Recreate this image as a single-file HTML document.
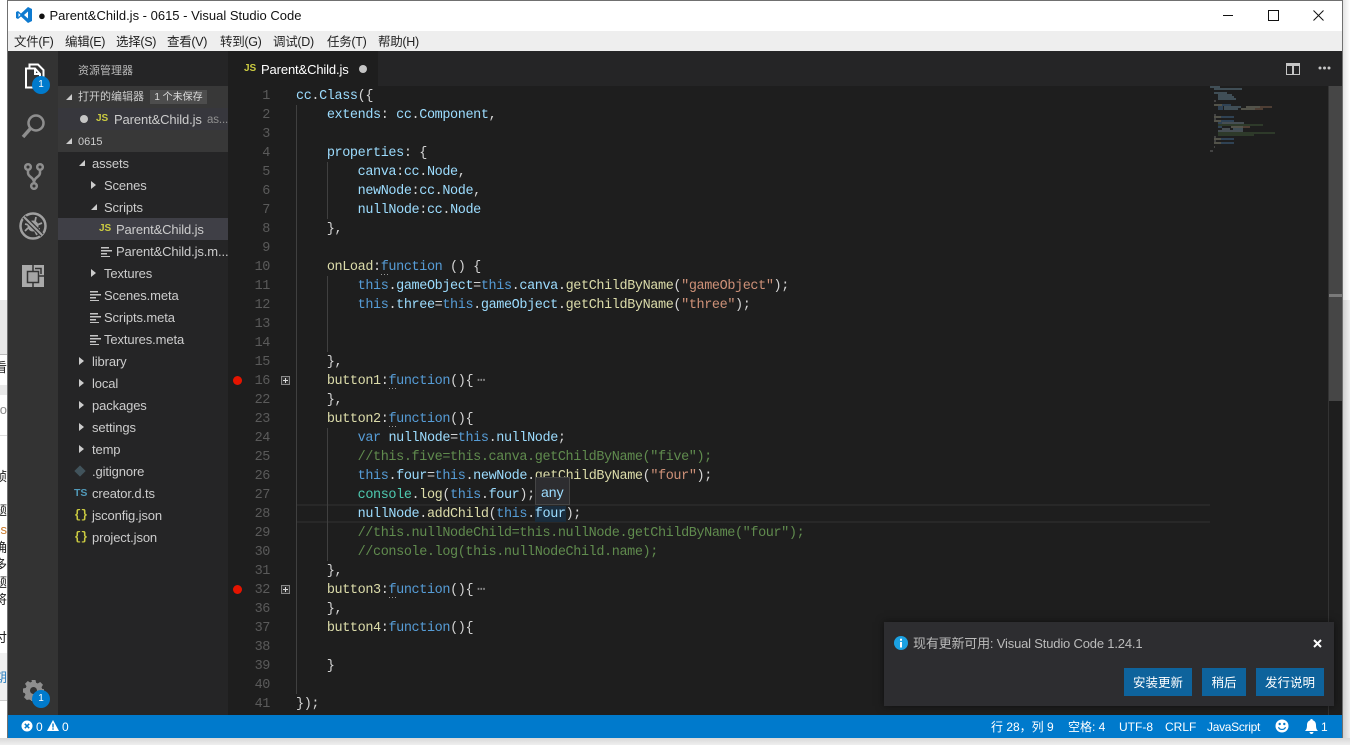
<!DOCTYPE html>
<html><head><meta charset="utf-8"><style>
html,body{margin:0;padding:0;width:1350px;height:745px;overflow:hidden;background:#fff}
body{position:relative;font-family:"Liberation Sans","Noto Sans CJK SC",sans-serif}
.a{position:absolute}
.t{position:absolute;white-space:nowrap}
.m{position:absolute;top:34px;font-size:12.5px;line-height:17px;letter-spacing:-.3px;color:#222;white-space:nowrap}
.r{position:absolute;white-space:nowrap;font-size:13px;line-height:24px;height:22px;letter-spacing:-.12px;color:#ccc}
.arrow-r{position:absolute;width:0;height:0;border-left:5px solid #ccc;border-top:4px solid transparent;border-bottom:4px solid transparent}
.arrow-d{position:absolute;width:0;height:0;border-right:6px solid #ccc;border-top:6px solid transparent}
.c{position:absolute;left:296px;font:13.5px/21px "Liberation Mono",monospace;letter-spacing:-.4px;white-space:pre;color:#d4d4d4}
.n{position:absolute;left:240px;width:30px;text-align:right;font:13.5px/21px "Liberation Mono",monospace;letter-spacing:-.4px;color:#5a5a5a}
.v{color:#9cdcfe}.f{color:#dcdcaa}.k{color:#569cd6}.s{color:#ce9178}.g{color:#608b4e}.y{color:#4ec9b0}
.btn{position:absolute;top:668px;height:28px;line-height:30px;background:#0e639c;color:#fff;text-align:center;font-size:12.500px}
.st{position:absolute;top:715px;line-height:24px;font-size:12px;color:#fff;white-space:nowrap}
.gd{position:absolute;width:1px;background:#404040}
.bk{position:absolute;left:0;width:7px;overflow:hidden;font-size:13px;line-height:16px;color:#222;white-space:nowrap;direction:rtl}
.badge{position:absolute;width:18px;height:18px;border-radius:9px;background:#007acc;color:#fff;font-size:10px;line-height:18px;text-align:center}
.dots{position:absolute;width:9px;height:1px;background:repeating-linear-gradient(90deg,#999 0 1px,transparent 1px 3px)}
.ji{position:absolute;font-size:10px;font-weight:bold;color:#cbcb41;line-height:12px}
.fi{position:absolute;width:11px;height:10px;background:linear-gradient(#c5c5c5,#c5c5c5) 0 0/8px 1.500px no-repeat,linear-gradient(#c5c5c5,#c5c5c5) 0 3px/11px 1.500px no-repeat,linear-gradient(#c5c5c5,#c5c5c5) 0 6px/6px 1.500px no-repeat,linear-gradient(#c5c5c5,#c5c5c5) 0 9px/9px 1.500px no-repeat}
.br{position:absolute;font:bold 12px/15px "Liberation Mono",monospace;letter-spacing:-.5px;color:#cbcb41}
</style></head><body>

<!-- background behind window -->
<div class="a" style="left:0;top:300px;width:7px;height:54px;background:#e9e9e9"></div>
<div class="a" style="left:0;top:354px;width:7px;height:1px;background:#bbb"></div>
<div class="a" style="left:0;top:385px;width:7px;height:10px;background:#e9e9e9"></div>
<div class="a" style="left:0;top:435px;width:7px;height:1px;background:#ddd"></div>
<div class="a" style="left:0;top:653px;width:7px;height:48px;background:#f0f0f0"></div>
<div class="a" style="left:0;top:700px;width:7px;height:1px;background:#ccc"></div>
<div class="bk" style="top:360px">看</div>
<div class="bk" style="top:402px;color:#888">o</div>
<div class="bk" style="top:469px">帧</div>
<div class="bk" style="top:503px">题</div>
<div class="bk" style="top:522px;color:#c87a2a">s</div>
<div class="bk" style="top:540px">确</div>
<div class="bk" style="top:557px">多</div>
<div class="bk" style="top:575px">题</div>
<div class="bk" style="top:592px">将</div>
<div class="bk" style="top:630px">付</div>
<div class="bk" style="top:670px;color:#2a7fc0">期</div>
<div class="a" style="left:1343px;top:0;width:7px;height:300px;background:linear-gradient(90deg,#e4e4e4,#fff)"></div>
<div class="a" style="left:1343px;top:300px;width:7px;height:445px;background:linear-gradient(90deg,#cfcfcf,#efefef)"></div>
<div class="a" style="left:0;top:738px;width:1350px;height:7px;background:linear-gradient(#d8d8d8,#efefef)"></div>

<!-- window -->
<div class="a" style="left:7px;top:0;width:1336px;height:738px;background:#1e1e1e"></div>
<div class="a" style="left:7px;top:0;width:1336px;height:31px;background:#fff"></div>
<div class="a" style="left:7px;top:0;width:1336px;height:1px;background:#707070"></div>
<div class="a" style="left:7px;top:31px;width:1336px;height:20px;background:#eee"></div>
<div class="a" style="left:7px;top:0;width:1px;height:738px;background:#707070"></div>
<div class="a" style="left:1342px;top:0;width:1px;height:738px;background:#707070"></div>

<svg class="a" style="left:16px;top:6px" width="17" height="18" viewBox="0 0 17 18"><path d="M12 1l4 2v12l-4 2-7-6.500-3 2.500-2-1V6l2-1 3 2.500z" fill="#0e7ad0"/><path d="M12 5.500L8 9l4 3.500zM2.500 7v4L4.500 9z" fill="#fff"/></svg>
<div class="t" style="left:38px;top:7px;font-size:13px;line-height:17px;color:#111"><span style="font-size:13px">●</span> Parent&amp;Child.js - 0615 - Visual Studio Code</div>

<div class="a" style="left:1223px;top:15px;width:10px;height:1px;background:#111"></div>
<div class="a" style="left:1268px;top:10px;width:9px;height:9px;border:1px solid #111"></div>
<svg class="a" style="left:1313px;top:10px" width="11" height="11"><path d="M.5.500l10 10M10.500.500l-10 10" stroke="#111" fill="none"/></svg>

<div class="m" style="left:14px">文件(F)</div>
<div class="m" style="left:65px">编辑(E)</div>
<div class="m" style="left:116px">选择(S)</div>
<div class="m" style="left:167px">查看(V)</div>
<div class="m" style="left:220px">转到(G)</div>
<div class="m" style="left:273px">调试(D)</div>
<div class="m" style="left:327px">任务(T)</div>
<div class="m" style="left:378px">帮助(H)</div>

<!-- activity bar -->
<div class="a" style="left:8px;top:51px;width:50px;height:664px;background:#333"></div>
<svg class="a" style="left:23px;top:63px" width="22" height="26" viewBox="0 0 22 26" fill="none" stroke="#fff" stroke-width="2"><path d="M6.500 5V1.500H15L20.500 7v11"/><path d="M3 5.500h9L17 11v13.500H3z"/><path d="M12 5.500V11h5"/></svg>
<div class="badge" style="left:32px;top:76px">1</div>
<svg class="a" style="left:21px;top:113px" width="25" height="26" viewBox="0 0 25 26" fill="none" stroke="#8e8e8e" stroke-width="2.500"><circle cx="15" cy="10" r="7.500"/><path d="M9.500 15.500L2 24" stroke-width="3.500"/></svg>
<svg class="a" style="left:24px;top:162px" width="20" height="28" viewBox="0 0 20 28" fill="none" stroke="#8e8e8e" stroke-width="2.500"><circle cx="4" cy="5" r="2.800"/><circle cx="16" cy="5" r="2.800"/><circle cx="10" cy="24" r="2.800"/><path d="M4 8v3c0 4 6 4 6 10M16 8v3c0 4-6 4-6 10"/></svg>
<svg class="a" style="left:19px;top:212px" width="28" height="28" viewBox="0 0 28 28" fill="none" stroke="#a0a0a0"><circle cx="14" cy="14" r="12.500" stroke-width="2.500"/><circle cx="14" cy="14" r="5.500" fill="#a0a0a0" stroke="none"/><path d="M17 5l-1 5M23 11l-5 2M9 16l-3 3M16 19l2 4M21 17h-3M10 8l2 3M6 12l4 1" stroke-width="1.800"/><path d="M5 5l18 18" stroke="#333" stroke-width="4.500"/><path d="M5 5l18 18" stroke-width="2"/></svg>
<svg class="a" style="left:22px;top:265px" width="22" height="22" viewBox="0 0 22 22"><path d="M0 0h22v22H0z" fill="#aaa"/><path d="M5.500 6.500h11v11h-11z" fill="#a4a4a4" stroke="#333" stroke-width="1.500"/><path d="M11 0v6M16 11h6M11 18v4" stroke="#333" stroke-width="1.500"/><path d="M13 3.500h6V9" fill="none" stroke="#333" stroke-width="1.500"/></svg>
<svg class="a" style="left:23px;top:680px" width="21" height="21" viewBox="0 0 21 21"><path fill="#8e8e8e" fill-rule="evenodd" d="M8.500 0h4l.6 2.800 1.700.7L17.200 2l2.800 2.800-1.500 2.400.7 1.700 2.800.6v4l-2.800.6-.7 1.700 1.500 2.400-2.800 2.800-2.400-1.500-1.700.7-.6 2.800h-4l-.6-2.800-1.700-.7L3.800 20 1 17.200l1.500-2.400-.7-1.700L0 12.500v-4l2.800-.6.7-1.700L2 3.800 4.800 1l2.400 1.500 1.700-.7zM10.500 7a3.500 3.500 0 100 7 3.500 3.500 0 000-7z"/></svg>
<div class="badge" style="left:32px;top:690px">1</div>

<!-- sidebar -->
<div class="a" style="left:58px;top:51px;width:170px;height:664px;background:#252526"></div>
<div class="t" style="left:78px;top:62px;font-size:11px;line-height:18px;color:#bbb">资源管理器</div>
<div class="a" style="left:58px;top:86px;width:170px;height:22px;background:#383838"></div>
<div class="arrow-d" style="left:66px;top:94px"></div>
<div class="t" style="left:78px;top:87px;font-size:11px;line-height:21px;color:#ccc">打开的编辑器</div>
<div class="t" style="left:150px;top:90px;width:57px;height:14px;background:#4d4d4d;color:#ddd;font-size:10px;line-height:16px;text-align:center">1 个未保存</div>
<div class="a" style="left:58px;top:108px;width:170px;height:22px;background:#37373d"></div>
<div class="a" style="left:80px;top:115px;width:8px;height:8px;border-radius:4px;background:#c5c5c5"></div>
<div class="ji" style="left:96px;top:113px">JS</div>
<div class="r" style="left:114px;top:108px">Parent&amp;Child.js</div>
<div class="r" style="left:207px;top:108px;font-size:11.5px;color:#8f8f8f">as...</div>
<div class="a" style="left:58px;top:130px;width:170px;height:22px;background:#383838"></div>
<div class="arrow-d" style="left:66px;top:138px"></div>
<div class="t" style="left:78px;top:131px;font-size:11px;line-height:22px;color:#ccc">0615</div>

<div class="arrow-d" style="left:79px;top:160px"></div><div class="r" style="left:92px;top:152px">assets</div>
<div class="arrow-r" style="left:91px;top:181px"></div><div class="r" style="left:104px;top:174px">Scenes</div>
<div class="arrow-d" style="left:91px;top:204px"></div><div class="r" style="left:104px;top:196px">Scripts</div>
<div class="a" style="left:58px;top:218px;width:170px;height:22px;background:#3f3f46"></div>
<div class="ji" style="left:99px;top:223px">JS</div><div class="r" style="left:116px;top:218px">Parent&amp;Child.js</div>
<div class="fi" style="left:101px;top:247px"></div><div class="r" style="left:116px;top:240px;width:112px;overflow:hidden">Parent&amp;Child.js.m...</div>
<div class="arrow-r" style="left:91px;top:269px"></div><div class="r" style="left:104px;top:262px">Textures</div>
<div class="fi" style="left:90px;top:291px"></div><div class="r" style="left:104px;top:284px">Scenes.meta</div>
<div class="fi" style="left:90px;top:313px"></div><div class="r" style="left:104px;top:306px">Scripts.meta</div>
<div class="fi" style="left:90px;top:335px"></div><div class="r" style="left:104px;top:328px">Textures.meta</div>
<div class="arrow-r" style="left:79px;top:357px"></div><div class="r" style="left:92px;top:350px">library</div>
<div class="arrow-r" style="left:79px;top:379px"></div><div class="r" style="left:92px;top:372px">local</div>
<div class="arrow-r" style="left:79px;top:401px"></div><div class="r" style="left:92px;top:394px">packages</div>
<div class="arrow-r" style="left:79px;top:423px"></div><div class="r" style="left:92px;top:416px">settings</div>
<div class="arrow-r" style="left:79px;top:445px"></div><div class="r" style="left:92px;top:438px">temp</div>
<div class="a" style="left:76px;top:467px;width:8px;height:8px;background:#41535b;transform:rotate(45deg)"></div><div class="r" style="left:92px;top:460px">.gitignore</div>
<div class="t" style="left:74px;top:487px;font-size:10.5px;font-weight:bold;line-height:12px;color:#519aba">TS</div><div class="r" style="left:92px;top:482px">creator.d.ts</div>
<div class="br" style="left:74px;top:508px">{}</div><div class="r" style="left:92px;top:504px">jsconfig.json</div>
<div class="br" style="left:74px;top:530px">{}</div><div class="r" style="left:92px;top:526px">project.json</div>

<!-- tabs -->
<div class="a" style="left:228px;top:51px;width:1114px;height:35px;background:#252526"></div>
<div class="a" style="left:228px;top:51px;width:150px;height:35px;background:#1e1e1e"></div>
<div class="ji" style="left:244px;top:63px">JS</div>
<div class="t" style="left:261px;top:61px;font-size:13px;line-height:18px;letter-spacing:-.13px;color:#fff">Parent&amp;Child.js</div>
<div class="a" style="left:359px;top:65px;width:8px;height:8px;border-radius:4px;background:#c5c5c5"></div>
<svg class="a" style="left:1286px;top:63px" width="14" height="12"><path d="M0 0h14v12H0z" fill="#c5c5c5"/><path d="M1 3h5v8H1zM8 3h5v8H8z" fill="#252526"/></svg>
<svg class="a" style="left:1318px;top:66px" width="13" height="4"><circle cx="2" cy="2" r="1.500" fill="#c5c5c5"/><circle cx="6.500" cy="2" r="1.500" fill="#c5c5c5"/><circle cx="11" cy="2" r="1.500" fill="#c5c5c5"/></svg>

<!-- current line -->
<div class="a" style="left:296px;top:504px;width:914px;height:15px;border:2px solid #282828;border-width:2px 0"></div>
<div class="a" style="left:535px;top:506px;width:31px;height:16px;background:#1a2c3c"></div>

<!-- guides -->
<div class="gd" style="left:296px;top:105px;height:589px"></div>
<div class="gd" style="left:327px;top:162px;height:57px"></div>
<div class="gd" style="left:327px;top:276px;height:76px"></div>
<div class="gd" style="left:327px;top:428px;height:133px"></div>

<!-- line numbers -->
<div class="n" style="top:86px">1</div><div class="n" style="top:105px">2</div><div class="n" style="top:124px">3</div><div class="n" style="top:143px">4</div><div class="n" style="top:162px">5</div><div class="n" style="top:181px">6</div><div class="n" style="top:200px">7</div><div class="n" style="top:219px">8</div><div class="n" style="top:238px">9</div><div class="n" style="top:257px">10</div><div class="n" style="top:276px">11</div><div class="n" style="top:295px">12</div><div class="n" style="top:314px">13</div><div class="n" style="top:333px">14</div><div class="n" style="top:352px">15</div><div class="n" style="top:371px">16</div><div class="n" style="top:390px">22</div><div class="n" style="top:409px">23</div><div class="n" style="top:428px">24</div><div class="n" style="top:447px">25</div><div class="n" style="top:466px">26</div><div class="n" style="top:485px">27</div><div class="n" style="top:504px">28</div><div class="n" style="top:523px">29</div><div class="n" style="top:542px">30</div><div class="n" style="top:561px">31</div><div class="n" style="top:580px">32</div><div class="n" style="top:599px">36</div><div class="n" style="top:618px">37</div><div class="n" style="top:637px">38</div><div class="n" style="top:656px">39</div><div class="n" style="top:675px">40</div><div class="n" style="top:694px">41</div>

<!-- breakpoints & folds -->
<div class="a" style="left:233px;top:376px;width:9px;height:9px;border-radius:5px;background:#e51400"></div>
<div class="a" style="left:233px;top:585px;width:9px;height:9px;border-radius:5px;background:#e51400"></div>
<svg class="a" style="left:281px;top:376px" width="9" height="9"><path d="M0 0h9v9H0z" fill="#8a8a8a"/><path d="M1 1h7v7H1z" fill="#333"/><path d="M2 4.500h5M4.500 2v5" stroke="#ddd"/></svg>
<svg class="a" style="left:281px;top:585px" width="9" height="9"><path d="M0 0h9v9H0z" fill="#8a8a8a"/><path d="M1 1h7v7H1z" fill="#333"/><path d="M2 4.500h5M4.500 2v5" stroke="#ddd"/></svg>

<!-- code -->
<div class="c" style="top:86px"><span class="v">cc</span>.<span class="v">Class</span>({</div>
<div class="c" style="top:105px">    <span class="v">extends</span>: <span class="v">cc</span>.<span class="v">Component</span>,</div>
<div class="c" style="top:143px">    <span class="v">properties</span>: {</div>
<div class="c" style="top:162px">        <span class="v">canva</span>:<span class="v">cc</span>.<span class="v">Node</span>,</div>
<div class="c" style="top:181px">        <span class="v">newNode</span>:<span class="v">cc</span>.<span class="v">Node</span>,</div>
<div class="c" style="top:200px">        <span class="v">nullNode</span>:<span class="v">cc</span>.<span class="v">Node</span></div>
<div class="c" style="top:219px">    },</div>
<div class="c" style="top:257px">    <span class="f">onLoad</span>:<span class="k">function</span> () {</div>
<div class="c" style="top:276px">        <span class="k">this</span>.<span class="v">gameObject</span>=<span class="k">this</span>.<span class="v">canva</span>.<span class="f">getChildByName</span>(<span class="s">"gameObject"</span>);</div>
<div class="c" style="top:295px">        <span class="k">this</span>.<span class="v">three</span>=<span class="k">this</span>.<span class="v">gameObject</span>.<span class="f">getChildByName</span>(<span class="s">"three"</span>);</div>
<div class="c" style="top:352px">    },</div>
<div class="c" style="top:371px">    <span class="f">button1</span>:<span class="k">function</span>(){<span style="color:#888;margin-left:4px">⋯</span></div>
<div class="c" style="top:390px">    },</div>
<div class="c" style="top:409px">    <span class="f">button2</span>:<span class="k">function</span>(){</div>
<div class="c" style="top:428px">        <span class="k">var</span> <span class="v">nullNode</span>=<span class="k">this</span>.<span class="v">nullNode</span>;</div>
<div class="c g" style="top:447px">        //this.five=this.canva.getChildByName("five");</div>
<div class="c" style="top:466px">        <span class="k">this</span>.<span class="v">four</span>=<span class="k">this</span>.<span class="v">newNode</span>.<span class="f">getChildByName</span>(<span class="s">"four"</span>);</div>
<div class="c" style="top:485px">        <span class="y">console</span>.<span class="f">log</span>(<span class="k">this</span>.<span class="v">four</span>);</div>
<div class="c" style="top:504px">        <span class="v">nullNode</span>.<span class="f">addChild</span>(<span class="k">this</span>.<span class="v">four</span>);</div>
<div class="c g" style="top:523px">        //this.nullNodeChild=this.nullNode.getChildByName("four");</div>
<div class="c g" style="top:542px">        //console.log(this.nullNodeChild.name);</div>
<div class="c" style="top:561px">    },</div>
<div class="c" style="top:580px">    <span class="f">button3</span>:<span class="k">function</span>(){<span style="color:#888;margin-left:4px">⋯</span></div>
<div class="c" style="top:599px">    },</div>
<div class="c" style="top:618px">    <span class="f">button4</span>:<span class="k">function</span>(){</div>
<div class="c" style="top:656px">    }</div>
<div class="c" style="top:694px">});</div>

<div class="dots" style="left:381px;top:274px"></div>
<div class="dots" style="left:389px;top:388px"></div>
<div class="dots" style="left:389px;top:426px"></div>
<div class="dots" style="left:389px;top:597px"></div>

<!-- hover -->
<div class="a" style="left:535px;top:477px;width:33px;height:26px;background:#2d2d30;border:1px solid #454545"></div>
<div class="t" style="left:541px;top:484px;font-size:14px;line-height:16px;color:#9cdcfe">any</div>

<!-- minimap -->
<svg class="a" style="left:1200px;top:86px;opacity:.7" width="100" height="70" viewBox="1200 86 100 70" fill="none" stroke-width="1">
<path stroke="#7fa6bd" d="M1210 87h10M1214 89h28M1214 93h13M1218 95h14M1218 97h16M1218 99h18M1224 107h17M1224 109h14M1233 129h10"/>
<path stroke="#b5b59a" d="M1214 105h8M1214 117h7M1214 121h7M1214 139h7M1214 143h7M1246 107h14M1241 109h14M1231 127h12"/>
<path stroke="#4f86b8" d="M1218 107h5M1218 109h5M1222 105h9M1221 117h13M1221 121h13M1218 123h4M1218 127h4M1218 131h4M1221 139h13M1221 143h13"/>
<path stroke="#a9785f" d="M1260 107h12M1255 109h8M1243 127h7"/>
<path stroke="#4d7040" d="M1218 125h45M1218 133h57M1218 135h36"/>
<path stroke="#8fa9b5" d="M1222 123h22M1222 129h8M1218 131h25"/>
<path stroke="#888" d="M1214 101h2M1214 115h2M1214 119h2M1214 137h2M1214 141h2M1214 147h1M1210 151h3"/>
</svg>

<!-- scrollbar -->
<div class="a" style="left:1328px;top:86px;width:1px;height:629px;background:#333"></div>
<div class="a" style="left:1329px;top:86px;width:13px;height:315px;background:#464646"></div>
<div class="a" style="left:1329px;top:294px;width:13px;height:3px;background:#7a7a7a"></div>

<!-- notification -->
<div class="a" style="left:884px;top:622px;width:450px;height:84px;background:#2d2d30;box-shadow:0 0 8px rgba(0,0,0,.5)"></div>
<svg class="a" style="left:894px;top:636px" width="14" height="14"><circle cx="7" cy="7" r="7" fill="#1ba1e2"/><path d="M6 6h2v5.500H6zM6 2.800h2v2H6z" fill="#fff"/></svg>
<div class="t" style="left:913px;top:635px;font-size:13px;line-height:18px;letter-spacing:-.18px;color:#bbb">现有更新可用: Visual Studio Code 1.24.1</div>
<svg class="a" style="left:1313px;top:639px" width="9" height="9"><path d="M1 1l7 7M8 1L1 8" stroke="#fff" stroke-width="2"/></svg>
<div class="btn" style="left:1124px;width:68px">安装更新</div>
<div class="btn" style="left:1202px;width:44px">稍后</div>
<div class="btn" style="left:1256px;width:68px">发行说明</div>

<!-- status bar -->
<div class="a" style="left:8px;top:715px;width:1334px;height:23px;background:#007acc"></div>
<svg class="a" style="left:21px;top:720px" width="12" height="12"><circle cx="6" cy="6" r="5.500" fill="#fff"/><path d="M3.800 3.800l4.400 4.400M8.200 3.800L3.800 8.200" stroke="#007acc" stroke-width="1.500"/></svg>
<div class="st" style="left:36px">0</div>
<svg class="a" style="left:47px;top:720px" width="12" height="11"><path d="M6 0l6 11H0z" fill="#fff"/><path d="M5.300 3.500h1.400v4H5.300zM5.300 8.300h1.400v1.400H5.300z" fill="#007acc"/></svg>
<div class="st" style="left:62px">0</div>
<div class="st" style="left:991px">行 28，列 9</div>
<div class="st" style="left:1068px">空格: 4</div>
<div class="st" style="left:1119px">UTF-8</div>
<div class="st" style="left:1165px">CRLF</div>
<div class="st" style="left:1207px;letter-spacing:-.3px">JavaScript</div>
<svg class="a" style="left:1275px;top:719px" width="14" height="14"><circle cx="7" cy="7" r="6.500" fill="#fff"/><circle cx="4.700" cy="5" r="1.200" fill="#007acc"/><circle cx="9.300" cy="5" r="1.200" fill="#007acc"/><path d="M3.500 8.200c1 3 6 3 7 0" fill="none" stroke="#007acc" stroke-width="1.200"/></svg>
<svg class="a" style="left:1305px;top:719px" width="13" height="15"><path d="M6.500 0c1 0 1.300.7 1.300 1.300C10 2 11 4 11 6c0 3 .5 4.500 2 6H0c1.500-1.500 2-3 2-6 0-2 1-4 3.200-4.700C5.200.7 5.500 0 6.500 0zM4.500 13h4c0 1-1 2-2 2s-2-1-2-2z" fill="#fff"/></svg>
<div class="st" style="left:1321px">1</div>

</body></html>
